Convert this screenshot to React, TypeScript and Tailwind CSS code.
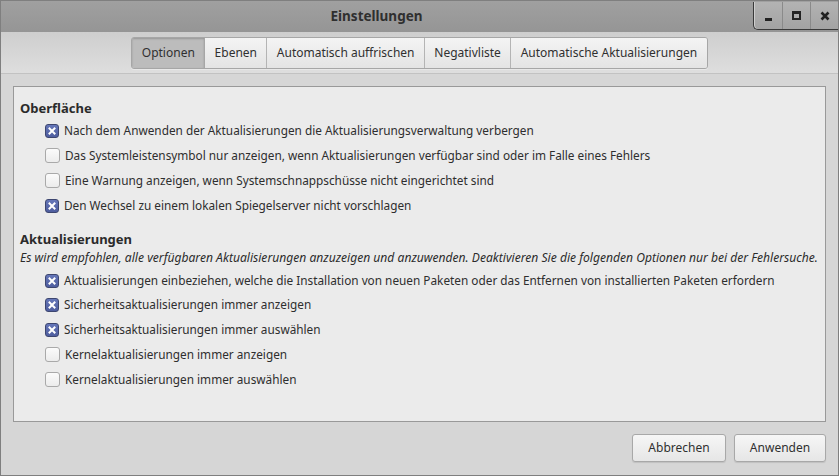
import React from "react";

const font = { fontFamily: '"Noto Sans", "Open Sans", sans-serif' };

function Check({ checked }: { checked: boolean }) {
  if (checked) {
    return (
      <span className="flex h-[14px] w-[14px] shrink-0 items-center justify-center rounded-[3px] border border-[#3d4670] bg-gradient-to-b from-[#6576b8] to-[#4e5d9e]">
        <svg width="8" height="8" viewBox="0 0 8 8">
          <path d="M1.5 1.5 L6.5 6.5 M6.5 1.5 L1.5 6.5" stroke="white" strokeWidth="2" strokeLinecap="square" />
        </svg>
      </span>
    );
  }
  return <span className="h-[15px] w-[15px] shrink-0 rounded-[3px] border border-[#a9a9a9] bg-gradient-to-b from-[#fbfbfb] to-[#ececec]" />;
}

function Row({ checked, label, h = "h-[25px]" }: { checked: boolean; label: string; h?: string }) {
  return (
    <div className={`flex ${h} items-center gap-[5px] pl-[25px]`}>
      <Check checked={checked} />
      <span className="whitespace-nowrap text-[11.8px] text-[#2e2e2e]">{label}</span>
    </div>
  );
}

const tabs = ["Optionen", "Ebenen", "Automatisch auffrischen", "Negativliste", "Automatische Aktualisierungen"];

export default function App() {
  return (
    <div style={font} className="flex h-[476px] w-[839px] flex-col overflow-hidden border border-[#7f7f7f] bg-[#d6d6d6]">
      {/* title bar */}
      <div className="relative flex h-[31px] shrink-0 items-center bg-gradient-to-b from-[#a0a0a0] to-[#959595]">
        <div className="flex flex-1 justify-center pr-[86px]">
          <span className="text-[13.5px] font-bold text-[#2f2f2f]">Einstellungen</span>
        </div>
        <div className="absolute right-[-1px] top-[1px] flex h-[28px] overflow-hidden rounded-bl-[5px] border border-[#3a3a3a] border-r-0 border-t-0 bg-gradient-to-b from-[#b3b3b3] to-[#a3a3a3] shadow-[inset_1px_0_0_#cfcfcf]">
          <div className="flex w-[29px] items-center justify-center border-r border-[#8a8a8a]">
            <span className="mt-[8px] h-[3px] w-[7px] bg-[#222]" />
          </div>
          <div className="flex w-[28px] items-center justify-center border-r border-[#8a8a8a]">
            <span className="h-[9px] w-[9px] border-[2px] border-[#222] border-t-[3px]" />
          </div>
          <div className="flex w-[28px] items-center justify-center">
            <svg width="10" height="10" viewBox="0 0 10 10">
              <path d="M1.5 1.5 L8.5 8.5 M8.5 1.5 L1.5 8.5" stroke="#222" strokeWidth="2.6" />
            </svg>
          </div>
        </div>
      </div>
      {/* toolbar */}
      <div className="flex h-[42px] shrink-0 items-center justify-center border-b border-[#c2c2c2] bg-gradient-to-b from-[#cecece] to-[#dedede]">
        <div className="flex h-[32px] overflow-hidden rounded-[3px] border border-[#a6a6a6] shadow-[0_1px_0_#e8e8e8]">
          {tabs.map((t, i) => (
            <div
              key={t}
              className={
                i === 0
                  ? "flex items-center border-r border-[#a6a6a6] bg-[#bcbcbc] px-[9.4px] text-[12px] text-[#303030] shadow-[inset_0_1px_2px_rgba(0,0,0,0.2)]"
                  : "flex items-center border-r border-[#b4b4b4] bg-gradient-to-b from-[#f4f4f4] to-[#e4e4e4] px-[9.4px] text-[12px] text-[#303030] last:border-r-0"
              }
            >
              {t}
            </div>
          ))}
        </div>
      </div>
      {/* content */}
      <div className="flex flex-1 flex-col px-[12px] pt-[12px] pb-[13px]">
        <div className="flex h-[336px] flex-col border border-[#999] bg-[#ebebeb] pl-[6px] pt-[11px]">
          <div className="h-[20px] text-[13px] font-bold leading-[20px] text-[#2b2b2b]">Oberfläche</div>
          <Row checked label="Nach dem Anwenden der Aktualisierungen die Aktualisierungsverwaltung verbergen" />
          <Row checked={false} label="Das Systemleistensymbol nur anzeigen, wenn Aktualisierungen verfügbar sind oder im Falle eines Fehlers" />
          <Row checked={false} label="Eine Warnung anzeigen, wenn Systemschnappschüsse nicht eingerichtet sind" />
          <Row checked label="Den Wechsel zu einem lokalen Spiegelserver nicht vorschlagen" />
          <div className="mt-[11px] h-[20px] text-[13px] font-bold leading-[20px] text-[#2b2b2b]">Aktualisierungen</div>
          <div className="h-[20px] whitespace-nowrap text-[12.1px] italic leading-[18px] text-[#2b2b2b]">
            Es wird empfohlen, alle verfügbaren Aktualisierungen anzuzeigen und anzuwenden. Deaktivieren Sie die folgenden Optionen nur bei der Fehlersuche.
          </div>
          <Row checked label="Aktualisierungen einbeziehen, welche die Installation von neuen Paketen oder das Entfernen von installierten Paketen erfordern" h="h-[24px]" />
          <Row checked label="Sicherheitsaktualisierungen immer anzeigen" h="h-[24px]" />
          <Row checked label="Sicherheitsaktualisierungen immer auswählen" h="h-[25px]" />
          <Row checked={false} label="Kernelaktualisierungen immer anzeigen" h="h-[25px]" />
          <Row checked={false} label="Kernelaktualisierungen immer auswählen" h="h-[25px]" />
        </div>
        <div className="mt-[12px] flex justify-end gap-[8px]">
          <button className="h-[28px] w-[94px] rounded-[3px] border border-[#a8a8a8] bg-gradient-to-b from-[#f6f6f6] to-[#e6e6e6] text-[12px] text-[#303030] shadow-[0_1px_1px_rgba(0,0,0,0.1)]">
            Abbrechen
          </button>
          <button className="h-[28px] w-[92px] rounded-[3px] border border-[#a8a8a8] bg-gradient-to-b from-[#f6f6f6] to-[#e6e6e6] text-[12px] text-[#303030] shadow-[0_1px_1px_rgba(0,0,0,0.1)]">
            Anwenden
          </button>
        </div>
      </div>
    </div>
  );
}
